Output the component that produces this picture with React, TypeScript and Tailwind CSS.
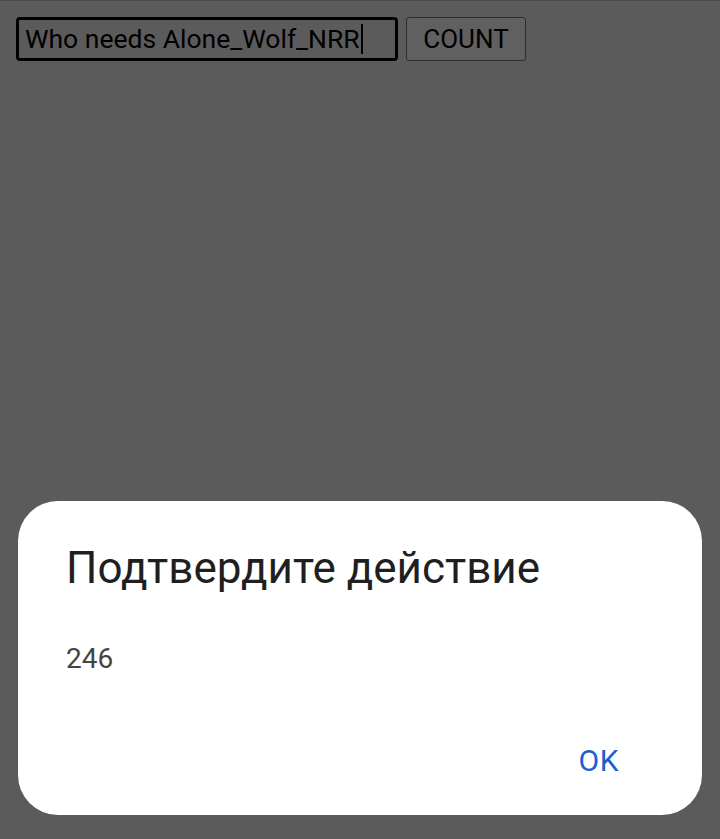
export default function App() {
  return (
    <div className="relative h-[839px] w-[720px] overflow-hidden bg-[#5b5b5b] font-['Roboto',sans-serif]">
      <div className="h-px w-full bg-[#4a4a4a]" />
      <div className="flex items-start gap-[8px] pl-4 pt-4">
        <div className="flex h-[44px] w-[382px] items-center rounded-[4px] border-[3px] border-black pl-[6px]">
          <span className="text-[26.5px] leading-none text-black">Who needs Alone_Wolf_NRR</span>
          <span className="ml-px h-[30px] w-[2px] bg-black" />
        </div>
        <button className="flex h-[44px] w-[120px] items-center justify-center rounded-[3px] border border-[#2e2e2e] bg-[#606060] text-[26px] leading-none text-black">
          COUNT
        </button>
      </div>

      <div className="absolute left-[18px] top-[501px] flex h-[314px] w-[684px] flex-col rounded-[40px] bg-white px-[48px]">
        <h1 className="mt-[45px] text-[44px] leading-none font-normal text-[#1f1f1f]">Подтвердите действие</h1>
        <p className="mt-[55px] text-[28px] leading-none text-[#444]">246</p>
        <div className="mt-auto mb-[39px] flex justify-end">
          <span className="mr-[35px] text-[30px] tracking-[0.5px] leading-none text-[#1b5fce]">OK</span>
        </div>
      </div>
    </div>
  );
}
